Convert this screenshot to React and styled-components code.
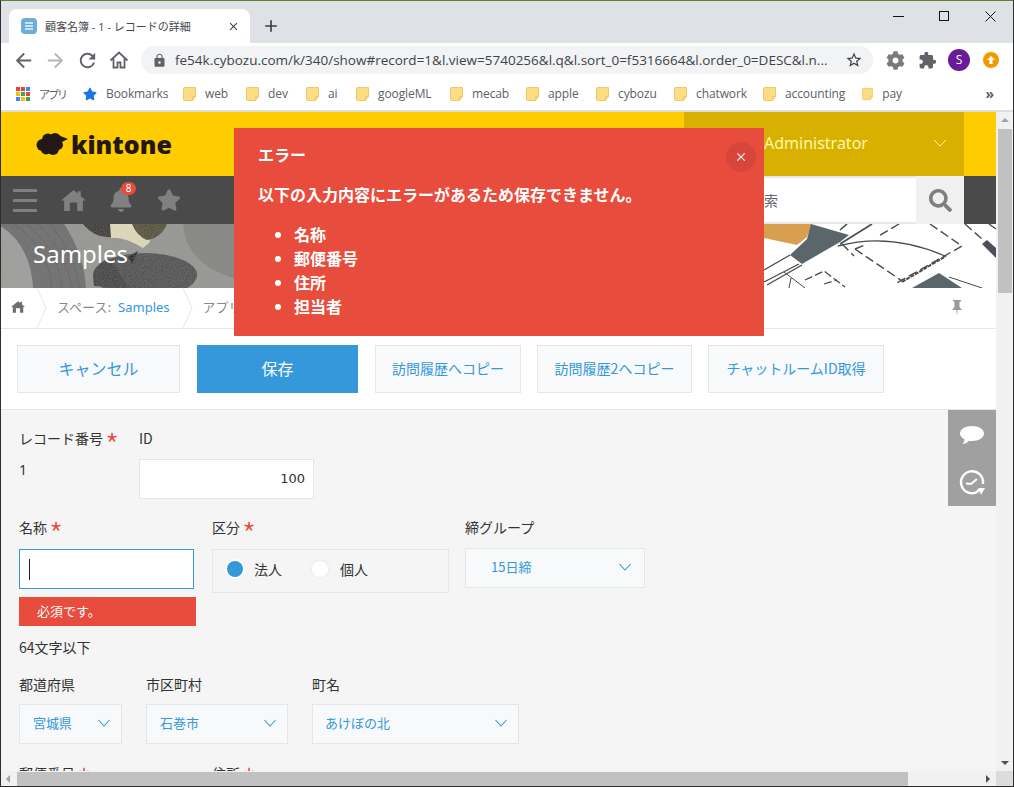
import React from 'react'
import styled, { createGlobalStyle } from 'styled-components'
import { MdArrowBack, MdArrowForward, MdRefresh, MdLock, MdStarBorder, MdExtension, MdClose, MdAdd } from 'react-icons/md'
import { FaBell, FaStar, FaSearch, FaCog } from 'react-icons/fa'

const JP = `"Noto Sans CJK JP", sans-serif`
const KIN = `"Noto Sans", "Noto Sans CJK JP", sans-serif`
const UI = `"Open Sans", "Noto Sans CJK JP", sans-serif`

const Global = createGlobalStyle`
  html, body { margin: 0; padding: 0; overflow: hidden; background: #fff; }
  * { box-sizing: border-box; }
`

const Win = styled.div`
  width: 1014px;
  height: 787px;
  display: flex;
  flex-direction: column;
  border: 1px solid #2e2e2e;
  border-top-color: #5f7f33;
  overflow: hidden;
  font-family: ${KIN};
`

/* browser chrome */
const TabStrip = styled.div`
  height: 42px;
  flex: none;
  background: #dee1e6;
  display: flex;
  align-items: flex-end;
  padding-left: 8px;
`

const Tab = styled.div`
  width: 241px;
  height: 34px;
  background: #fff;
  border-radius: 8px 8px 0 0;
  display: flex;
  align-items: center;
  padding: 0 10px 0 12px;
  font: 11px ${UI};
  color: #45484c;
`

const TabTitle = styled.span`
  margin-left: 8px;
  flex: 1;
`

const NewTab = styled.div`
  height: 34px;
  margin-left: 11px;
  display: flex;
  align-items: center;
  color: #3c4043;
  font-size: 20px;
`

const WinControls = styled.div`
  margin-left: auto;
  align-self: flex-start;
  display: flex;
  padding-top: 4px;
`

const WinBtn = styled.div`
  width: 46px;
  height: 22px;
  display: flex;
  align-items: center;
  justify-content: center;
`

const Toolbar = styled.div`
  height: 34px;
  flex: none;
  background: #fff;
  display: flex;
  align-items: center;
  padding-left: 6px;
`

const NavBtn = styled.div`
  width: 32px;
  display: flex;
  justify-content: center;
  color: ${p => p.$off ? '#b4b6b9' : '#5f6368'};
  font-size: 23px;
`

const Omni = styled.div`
  width: 732px;
  height: 28px;
  margin: 0 6px;
  border-radius: 14px;
  background: #f1f3f4;
  display: flex;
  align-items: center;
  padding: 0 10px 0 11px;
  color: #5f6368;
  font-size: 15px;
`

const Url = styled.span`
  margin-left: 8px;
  flex: 1;
  font: 13.5px ${UI};
  color: #3f4347;
  white-space: nowrap;
`

const ExtBtn = styled.div`
  width: 32px;
  display: flex;
  justify-content: center;
  color: ${p => p.$light ? '#7b7b7b' : '#5f6368'};
  font-size: 19px;
`

const Avatar = styled.div`
  width: 22px;
  height: 22px;
  border-radius: 50%;
  background: #6a1b9a;
  color: #fff;
  font: 12px/22px ${UI};
  text-align: center;
`

const Update = styled.div`
  width: 16px;
  height: 16px;
  border-radius: 50%;
  background: #f29900;
  display: flex;
  align-items: center;
  justify-content: center;
`

const Bookmarks = styled.div`
  height: 33px;
  flex: none;
  background: #fff;
  display: flex;
  align-items: center;
  padding-left: 15px;
  font: 12px ${UI};
  letter-spacing: -0.1px;
  color: #5c6064;
`

const Mark = styled.div`
  display: flex;
  align-items: center;
  gap: 9px;
  width: ${p => p.$w}px;
  flex: none;
  white-space: nowrap;
`

const Narrow = styled.span`
  font-size: 11px;
  letter-spacing: -2px;
`

const More = styled.div`
  margin-left: auto;
  padding-right: 19px;
  font-size: 14px;
  font-weight: 700;
  line-height: 1;
`

/* kintone page */
const Viewport = styled.div`
  flex: 1;
  min-height: 0;
  display: flex;
  border-top: 2px solid #dcdfe0;
`

const Main = styled.div`
  width: 995px;
  position: relative;
  overflow: hidden;
  background: #fff;
  font-family: ${JP};
`

const Header = styled.div`
  height: 64px;
  background: #fc0;
  display: flex;
  justify-content: space-between;
  padding: 0 32px 0 35px;
`

const Logo = styled.div`
  display: flex;
  align-items: center;
  gap: 3px;
  font: 800 25px "Open Sans", sans-serif;
  color: #231815;
`

const Account = styled.div`
  width: 280px;
  background: #d8b100;
  color: #fff7a8;
  display: flex;
  align-items: center;
  justify-content: space-between;
  padding: 0 17px 2px 80px;
  font: 16px ${KIN};
`

const GlobalNav = styled.div`
  height: 48px;
  background: #4a4a4a;
  display: flex;
  align-items: center;
  padding-right: 32px;
`

const NavIcon = styled.div`
  width: 48px;
  height: 48px;
  position: relative;
  display: flex;
  align-items: center;
  justify-content: center;
  color: #808080;
  font-size: 24px;
`

const Badge = styled.span`
  position: absolute;
  top: 6px;
  left: 24px;
  width: 15px;
  height: 13px;
  border-radius: 7px;
  background: #e74c3c;
  color: #fff;
  font: 10px/13px ${KIN};
  text-align: center;
`

const SearchBox = styled.div`
  margin-left: auto;
  width: 232px;
  height: 48px;
  background: #fff;
  border-top: 2px solid #e8e8e8;
  border-bottom: 2px solid #e8e8e8;
  font-size: 14px;
  line-height: 44px;
  color: #666;
  padding-left: 66px;
`

const SearchBtn = styled.div`
  width: 48px;
  height: 48px;
  background: #f0f0f0;
  color: #7f7f7f;
  font-size: 23px;
  display: flex;
  align-items: center;
  justify-content: center;
`

const Banner = styled.div`
  height: 64px;
  position: relative;
  background: #9a9a97;
  padding-left: 32px;
`

const BannerArt = styled.svg`
  position: absolute;
  inset: 0;
`

const SpaceTitle = styled.div`
  position: relative;
  font: 24px/60px ${KIN};
  color: #fff;
`

const Crumbs = styled.div`
  height: 41px;
  border-bottom: 1px solid #e3e7e8;
  display: flex;
  align-items: center;
  font-size: 13px;
  color: #888;
`

const Crumb = styled.div`
  height: 40px;
  display: flex;
  align-items: center;
  padding: 0 0 3px ${p => p.$pad}px;
`

const CrumbIcon = styled.div`
  width: 35px;
  display: flex;
`

const Sep = styled.svg`
  width: 11px;
  height: 40px;
  margin-left: ${p => p.$gap}px;
`

const CrumbLink = styled.span`
  color: #3498db;
  font-family: ${KIN};
  margin-left: 7px;
`

const Pin = styled.svg`
  margin-left: auto;
  margin-right: 34px;
`

const Actions = styled.div`
  height: 81px;
  border-bottom: 1px solid #e3e7e8;
  display: flex;
  align-items: center;
  padding: 0 0 1px 16px;
  gap: 16px;
`

const Btn = styled.div`
  width: ${p => p.$w}px;
  height: 48px;
  margin-right: ${p => p.$big ? 1 : 0}px;
  display: flex;
  align-items: center;
  justify-content: center;
  padding-bottom: 2px;
  font-size: ${p => p.$big ? 16 : 14}px;
  background: ${p => p.$primary ? '#3498db' : '#f7f9fa'};
  color: ${p => p.$primary ? '#fff' : '#3498db'};
  border: 1px solid ${p => p.$primary ? '#3498db' : '#e3e7e8'};
`

const Form = styled.div`
  background: #f5f5f5;
  height: 361px;
  padding: 19px 0 0 18px;
  position: relative;
  overflow: hidden;
  font-size: 14px;
  color: #333;
`

const Side = styled.div`
  position: absolute;
  top: 0;
  right: 0;
  width: 48px;
  height: 96px;
  background: #a0a0a0;
  display: flex;
  flex-direction: column;
`

const SideBtn = styled.div`
  height: 48px;
  padding-top: 2px;
  display: flex;
  align-items: center;
  justify-content: center;
`

const Row = styled.div`
  display: flex;
  margin-top: ${p => p.$top || 0}px;
`

const Field = styled.div`
  width: ${p => p.$w}px;
  flex: none;
`

const Label = styled.div`
  height: 20px;
  line-height: 19px;
  white-space: nowrap;
`

const Req = styled.span`
  color: #e74c3c;
  font-size: 32px;
  font-weight: 300;
  line-height: 0;
  margin-left: 2px;
  vertical-align: -13.5px;
`

const Value = styled.div`
  margin-top: 11px;
  line-height: 20px;
  font-family: ${KIN};
`

const NumInput = styled.div`
  margin-top: 10px;
  width: 175px;
  height: 40px;
  background: #fff;
  border: 1px solid #e3e7e8;
  text-align: right;
  padding-right: 8px;
  line-height: 38px;
  font-family: "DejaVu Sans", sans-serif;
  font-size: 13px;
`

const TextInput = styled.div`
  margin-top: 11px;
  width: 175px;
  height: 40px;
  background: #fff;
  border: 1px solid #3498db;
  padding: 9px 0 0 9px;
`

const Caret = styled.div`
  width: 1px;
  height: 21px;
  background: #222;
`

const ErrorTag = styled.div`
  margin-top: 8px;
  width: 177px;
  height: 29px;
  background: #e74c3c;
  color: #fff;
  font-size: 13px;
  line-height: 27px;
  padding-left: 18px;
`

const Hint = styled.div`
  margin-top: 12px;
  height: 20px;
  line-height: 18px;
`

const RadioGroup = styled.div`
  margin-top: 11px;
  width: 237px;
  height: 44px;
  border: 1px solid #e3e7e8;
  display: flex;
  align-items: center;
  padding: 0 0 4px 14px;
`

const Radio = styled.span`
  width: 16px;
  height: 16px;
  border-radius: 50%;
  background: ${p => p.$on ? '#3498db' : '#fff'};
  box-shadow: 0 0 0 2px ${p => p.$on ? '#fff' : '#f0f0f0'};
  margin: 0 ${p => p.$on ? 11 : 12}px 0 ${p => p.$on ? 0 : 30}px;
`

const Select = styled.div`
  margin-top: ${p => p.$top}px;
  width: ${p => p.$w}px;
  height: 40px;
  background: #f7f9fa;
  border: 1px solid #e3e7e8;
  display: flex;
  align-items: center;
  justify-content: space-between;
  padding: 0 ${p => p.$right || 11}px 3px ${p => p.$pad}px;
  color: #3498db;
  font-size: 13px;
`

/* fake scrollbars */
const VBar = styled.div`
  width: 17px;
  background: #f1f1f1;
  display: flex;
  flex-direction: column;
  align-items: center;
`

const HBar = styled.div`
  height: 15px;
  flex: none;
  background: #f1f1f1;
  display: flex;
  align-items: center;
`

const VThumb = styled.div`
  width: 14px;
  height: 164px;
  background: #c1c1c1;
`

const HThumb = styled.div`
  width: 891px;
  height: 14px;
  background: #c1c1c1;
`

const Arrow = styled.div`
  width: 0;
  height: 0;
  flex: none;
  border: 4px solid transparent;
  ${p => p.$dir === 'up' && 'border-bottom-color: #a3a3a3; border-top-width: 0; margin: 6px 0 7px;'}
  ${p => p.$dir === 'down' && 'border-top-color: #505050; border-bottom-width: 0; margin: auto 0 6px;'}
  ${p => p.$dir === 'left' && 'border-right-color: #a3a3a3; border-left-width: 0; margin: 0 7px 0 5px;'}
  ${p => p.$dir === 'right' && 'border-left-color: #505050; border-right-width: 0; margin: 0 6px 0 auto;'}
`

const Corner = styled.div`
  width: 17px;
  height: 15px;
  background: #dcdcdc;
`

/* error notification */
const Alert = styled.div`
  position: absolute;
  top: 16px;
  left: 233px;
  width: 530px;
  height: 208px;
  background: #e74c3c;
  color: #fff;
  padding: 14px 24px;
  font-size: 16px;
  font-weight: 700;
  line-height: 24px;
`

const AlertText = styled.div`
  margin-top: 16px;
`

const AlertList = styled.ul`
  margin: 16px 0 0;
  padding-left: 36px;
`

const AlertClose = styled.div`
  position: absolute;
  top: 14px;
  right: 8px;
  width: 30px;
  height: 30px;
  border-radius: 50%;
  background: #d6463a;
  display: flex;
  align-items: center;
  justify-content: center;
  font-size: 14px;
`

const Folder = () => (
  <svg width="13" height="14" viewBox="0 0 13 14">
    <path d="M.5 1.500a1 1 0 0 1 1-1h7l4 0v9l-3 4h-8a1 1 0 0 1-1-1z" fill="#fddd82" stroke="#ecc869" />
    <path d="M12.500 9.500h-3v4" fill="none" stroke="#ecc869" />
  </svg>
)

const Chevron = () => (
  <svg width="12" height="8" viewBox="0 0 12 8" fill="none" stroke="#3498db" strokeWidth="1.1">
    <path d="M.5 1l5.500 6 5.500-6" />
  </svg>
)

const Chev = ({ gap }) => (
  <Sep $gap={gap} viewBox="0 0 11 40" fill="none" stroke="#e3e7e8">
    <path d="M1 0l9 20-9 20" />
  </Sep>
)

const Cloud = () => (
  <svg width="32" height="24" viewBox="0 0 32 24" fill="#231815">
    <circle cx="6.500" cy="13" r="6" />
    <circle cx="12" cy="7.500" r="6" />
    <circle cx="19" cy="7" r="6" />
    <circle cx="22" cy="13" r="5" />
    <circle cx="17" cy="17" r="6" />
    <circle cx="10" cy="17.500" r="5" />
    <path d="M22 3l10 4-8 4z" />
  </svg>
)

const HomeIcon = ({ size, color }) => (
  <svg width={size} height={size} viewBox="0 0 24 24" fill={color}>
    <path d="M12 2l4 3.300V3h3v4.800L24 12h-3v10h-5.500v-8h-7v8H3V12H0z" />
  </svg>
)

const colors = ['#ea4335', '#ea4335', '#4285f4', '#fbbc05', '#34a853', '#ea4335', '#4285f4', '#fbbc05', '#34a853']

const AppsIcon = () => (
  <svg width="14" height="14" viewBox="0 0 14 14">
    {colors.map((c, i) => (
      <rect key={i} x={(i % 3) * 5} y={Math.floor(i / 3) * 5} width="4" height="4" fill={c} />
    ))}
  </svg>
)

const bookmarks = [
  ['web', 63], ['dev', 60], ['ai', 50], ['googleML', 94], ['mecab', 76],
  ['apple', 70], ['cybozu', 78], ['chatwork', 89], ['accounting', 99], ['pay', 40],
]

function Browser() {
  return (
    <>
      <TabStrip>
        <Tab>
          <svg width="16" height="16" viewBox="0 0 16 16">
            <rect width="16" height="16" rx="4" fill="#6aaedb" />
            <path d="M4 5h8M4 8h8M4 11h8" stroke="#e8f3fa" strokeWidth="1.6" />
          </svg>
          <TabTitle>顧客名簿 - 1 - レコードの詳細</TabTitle>
          <MdClose size={13} color="#3c4043" />
        </Tab>
        <NewTab><MdAdd /></NewTab>
        <WinControls>
          <WinBtn><svg width="11" height="11"><path d="M0 5.500h11" stroke="#111" /></svg></WinBtn>
          <WinBtn><svg width="11" height="11"><rect x=".5" y=".5" width="9" height="9" fill="none" stroke="#111" /></svg></WinBtn>
          <WinBtn><svg width="11" height="11"><path d="M.5.5l10 10M10.500.5l-10 10" stroke="#111" /></svg></WinBtn>
        </WinControls>
      </TabStrip>
      <Toolbar>
        <NavBtn><MdArrowBack /></NavBtn>
        <NavBtn $off><MdArrowForward /></NavBtn>
        <NavBtn><MdRefresh /></NavBtn>
        <NavBtn>
          <svg width="20" height="20" viewBox="0 0 20 20" fill="none" stroke="#5f6368" strokeWidth="1.8">
            <path d="M1.500 10.500L10 2.500l8.500 8M4.500 8.500v9h4v-5h3v5h4v-9" />
          </svg>
        </NavBtn>
        <Omni>
          <MdLock />
          <Url>fe54k.cybozu.com/k/340/show#record=1&amp;l.view=5740256&amp;l.q&amp;l.sort_0=f5316664&amp;l.order_0=DESC&amp;l.n...</Url>
          <MdStarBorder size={18} color="#3c4043" />
        </Omni>
        <ExtBtn $light><FaCog /></ExtBtn>
        <ExtBtn><MdExtension /></ExtBtn>
        <ExtBtn><Avatar>S</Avatar></ExtBtn>
        <ExtBtn>
          <Update>
            <svg width="10" height="10" viewBox="0 0 10 10"><path d="M5 1l4 4H6.600v4H3.400V5H1z" fill="#fff" /></svg>
          </Update>
        </ExtBtn>
      </Toolbar>
      <Bookmarks>
        <Mark $w={67}><AppsIcon /><Narrow>アプリ</Narrow></Mark>
        <Mark $w={100}><FaStar color="#1a73e8" size={14} />Bookmarks</Mark>
        {bookmarks.map(([name, w]) => (
          <Mark key={name} $w={w}><Folder />{name}</Mark>
        ))}
        <More>»</More>
      </Bookmarks>
    </>
  )
}

function BannerImage() {
  return (
    <BannerArt width="995" height="64" viewBox="1 0 995 64">
      <defs>
        <filter id="grain" x="0" y="0" width="100%" height="100%">
          <feTurbulence type="fractalNoise" baseFrequency="0.9" numOctaves="2" />
          <feColorMatrix values="0 0 0 0 0.3  0 0 0 0 0.3  0 0 0 0 0.3  0 0 0 0.5 -0.1" />
          <feComposite in2="SourceGraphic" operator="in" />
          <feMerge>
            <feMergeNode in="SourceGraphic" />
            <feMergeNode />
          </feMerge>
        </filter>
      </defs>
      <g filter="url(#grain)">
        <rect x="0" y="0" width="236" height="64" fill="#9a9a97" />
        <path d="M183 0q2 40 53 55V0z" fill="#888886" />
        <path d="M0 0h64q20 30 22 64H33Q30 20 0 2z" fill="#6e6e6e" />
        <path d="M0 2q30 18 33 62H0z" fill="#a2a2a0" />
        <path d="M83 0h30q4 10 0 13-18 2-30-13z" fill="#37332e" />
        <path d="M110 0h37l3 18-7 6q-20-12-32-10z" fill="#e6e0c0" />
        <path d="M132 0h35q-6 14-20 16-10-4-15-16z" fill="#55502f" />
        <ellipse cx="145" cy="51" rx="52" ry="22" fill="#505050" />
        <path d="M94 62q-4-20 15-28l20 30z" fill="#3e3e3e" />
        <path d="M128 33l10-6-6 13z" fill="#161616" />
      </g>
      <g stroke="#555" strokeWidth="1" opacity=".3" fill="none">
        <path d="M14 0q34 24 38 64M26 0q32 24 36 64M38 0q28 26 34 64M50 0q24 28 30 64" />
      </g>
      <rect x="764" width="233" height="64" fill="#fff" />
      <path d="M764 0h48l-5 13-10 8-33-7z" fill="#d8a04e" />
      <path d="M811 0l38 11-9 7-38 22-12-9 17-16z" fill="#5a666c" />
      <g fill="none" stroke="#4a4a4a">
        <path d="M790 31l-26 15M799 40l-35 18M802 41l-35 20" strokeWidth="1.4" />
        <path d="M847 0l-7 6M872 0l-32 20" strokeWidth="1.6" />
        <path d="M838 22q52-14 107 10" strokeWidth="1.3" />
        <path d="M899 0l-22 13M930 0l32 22-67 38M855 25l47 32M855 25l10-4M842 20l12 12M965 0l17 15M989 0l7 5" strokeDasharray="9 4" strokeWidth="1.4" />
        <path d="M902 58l44-26" strokeWidth="2" strokeDasharray="4 1" />
        <path d="M805 56l19-9 21 16M824 60l13-4" strokeDasharray="8 3" strokeWidth="1.3" />
        <path d="M784 48l21 16M791 54l-2 10M949 53l33 11" />
      </g>
      <path d="M939 49l-27 15h50z" fill="#5a666c" />
      <path d="M982 20l5-4 9 8v10z" fill="#4a4f5a" />
    </BannerArt>
  )
}

export default function App() {
  return (
    <>
      <Global />
      <Win>
        <Browser />
        <Viewport>
          <Main>
            <Header>
              <Logo><Cloud />kintone</Logo>
              <Account>
                Administrator
                <svg width="14" height="8" viewBox="0 0 14 8" fill="none" stroke="#fff7a8"><path d="M1 1l6 6 6-6" /></svg>
              </Account>
            </Header>
            <GlobalNav>
              <NavIcon>
                <svg width="26" height="24" viewBox="0 0 26 24" fill="#808080">
                  <rect x="1" y="1" width="24" height="3" />
                  <rect x="1" y="11" width="24" height="3" />
                  <rect x="1" y="21" width="24" height="3" />
                </svg>
              </NavIcon>
              <NavIcon><HomeIcon size={25} color="#808080" /></NavIcon>
              <NavIcon><FaBell /><Badge>8</Badge></NavIcon>
              <NavIcon><FaStar /></NavIcon>
              <SearchBox>検索</SearchBox>
              <SearchBtn><FaSearch /></SearchBtn>
            </GlobalNav>
            <Banner>
              <BannerImage />
              <SpaceTitle>Samples</SpaceTitle>
            </Banner>
            <Crumbs>
              <Crumb $pad={10}>
                <CrumbIcon><HomeIcon size={14} color="#6e6e6e" /></CrumbIcon>
              </Crumb>
              <Chev gap={-10} />
              <Crumb $pad={10}>スペース:<CrumbLink>Samples</CrumbLink></Crumb>
              <Chev gap={12} />
              <Crumb $pad={10}>アプリ</Crumb>
              <Pin width="10" height="16" viewBox="0 0 10 16" fill="#9a9a9a">
                <path d="M1 0h8v1.500H7.500V7L10 10H5.600l-.6 6-.6-6H0l2.500-3V1.500H1z" />
              </Pin>
            </Crumbs>
            <Actions>
              <Btn $w={163} $big>キャンセル</Btn>
              <Btn $w={161} $big $primary>保存</Btn>
              <Btn $w={146}>訪問履歴へコピー</Btn>
              <Btn $w={155}>訪問履歴2へコピー</Btn>
              <Btn $w={176}>チャットルームID取得</Btn>
            </Actions>
            <Form>
              <Side>
                <SideBtn>
                  <svg width="24" height="20" viewBox="0 0 24 20" fill="#fff">
                    <path d="M12 1c6.600 0 12 3.100 12 7.500S18.600 16 12 16c-1 0-2-.1-3-.3C7.500 17.500 5 19 2.500 19c1.200-1.200 2-3 2-4.800C1.800 13 0 11 0 8.500 0 4.100 5.400 1 12 1z" />
                  </svg>
                </SideBtn>
                <SideBtn>
                  <svg width="26" height="26" viewBox="0 0 26 26" fill="none" stroke="#fff" strokeWidth="2.4">
                    <path d="M19 21.500A11 11 0 1 1 24 13v1" />
                    <path d="M12 14l6-5M12 14l-5-.5" strokeWidth="2" />
                    <path d="M20 18h6l-4 7-1-3-4-1z" fill="#fff" stroke="none" />
                  </svg>
                </SideBtn>
              </Side>
              <Row>
                <Field $w={120}>
                  <Label>レコード番号<Req>*</Req></Label>
                  <Value>1</Value>
                </Field>
                <Field $w={200}>
                  <Label>ID</Label>
                  <NumInput>100</NumInput>
                </Field>
              </Row>
              <Row $top={19}>
                <Field $w={193}>
                  <Label>名称<Req>*</Req></Label>
                  <TextInput><Caret /></TextInput>
                  <ErrorTag>必須です。</ErrorTag>
                  <Hint>64文字以下</Hint>
                </Field>
                <Field $w={253}>
                  <Label>区分<Req>*</Req></Label>
                  <RadioGroup>
                    <Radio $on />法人
                    <Radio />個人
                  </RadioGroup>
                </Field>
                <Field $w={200}>
                  <Label>締グループ</Label>
                  <Select $top={10} $w={180} $pad={25} $right={13}>15日締<Chevron /></Select>
                </Field>
              </Row>
              <Row $top={17}>
                <Field $w={127}>
                  <Label>都道府県</Label>
                  <Select $top={9} $w={103} $pad={13}>宮城県<Chevron /></Select>
                </Field>
                <Field $w={166}>
                  <Label>市区町村</Label>
                  <Select $top={9} $w={142} $pad={13}>石巻市<Chevron /></Select>
                </Field>
                <Field $w={220}>
                  <Label>町名</Label>
                  <Select $top={9} $w={207} $pad={12}>あけぼの北<Chevron /></Select>
                </Field>
              </Row>
              <Row $top={20}>
                <Field $w={193}><Label>郵便番号<Req>*</Req></Label></Field>
                <Field $w={200}><Label>住所<Req>*</Req></Label></Field>
              </Row>
            </Form>
            <Alert>
              <div>エラー</div>
              <AlertText>以下の入力内容にエラーがあるため保存できません。</AlertText>
              <AlertList>
                <li>名称</li>
                <li>郵便番号</li>
                <li>住所</li>
                <li>担当者</li>
              </AlertList>
              <AlertClose><MdClose /></AlertClose>
            </Alert>
          </Main>
          <VBar>
            <Arrow $dir="up" />
            <VThumb />
            <Arrow $dir="down" />
          </VBar>
        </Viewport>
        <HBar>
          <Arrow $dir="left" />
          <HThumb />
          <Arrow $dir="right" />
          <Corner />
        </HBar>
      </Win>
    </>
  )
}
